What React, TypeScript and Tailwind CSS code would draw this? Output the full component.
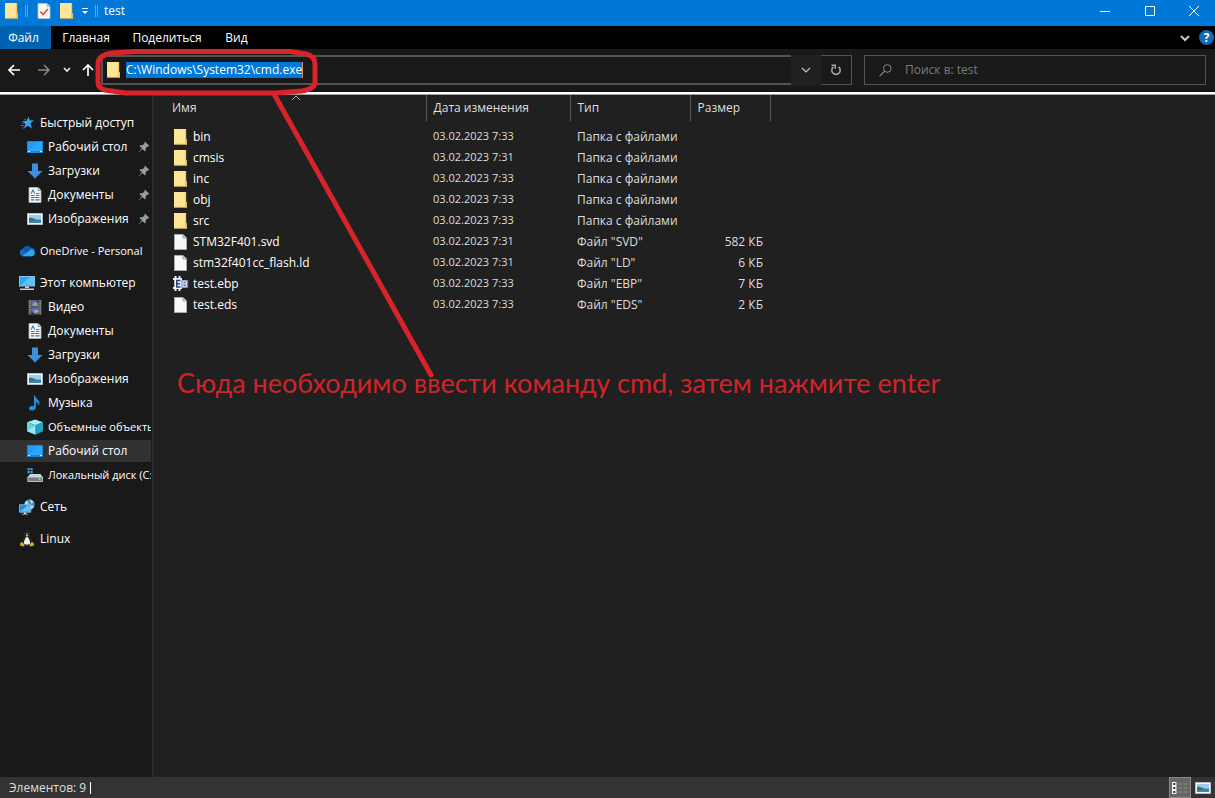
import type { ReactNode } from "react";

type Kind =
  | "star" | "desktop" | "download" | "document" | "picture" | "cloud" | "computer"
  | "video" | "music" | "cube" | "disk" | "network" | "linux" | "folder" | "file" | "project";

const glyphs: Record<Kind, ReactNode> = {
  star: (
    <>
      <path d="M9.5 1.5l1.3 4 4.2-.2-3.500 3 1.400 5.200-4-2.800L5 13.500l1.500-4.400L3.500 6.300l4.200-.5z" fill="#35a7ef" />
      <path d="M2.500 8h3M1.500 10.500h4M3 13h2.500M5 4.500h2" stroke="#1c6fa8" strokeWidth="1" />
    </>
  ),
  desktop: (
    <>
      <path d="M0 2h16v12H0z" fill="#1488e0" />
      <path d="M1 3h14v9H1z" fill="#1f9dfb" />
      <path d="M1 12L12 3h3v9z" fill="#3aabff" opacity=".6" />
      <path d="M1 12.500h2M13 12.500h2" stroke="#d8efff" strokeWidth="1" />
    </>
  ),
  download: <path d="M5 0.500h6v7.500h4.500L8 15.500.500 8H5z" fill="#3b8fdd" />,
  document: (
    <>
      <path d="M2 .5h9l3 3v12H2z" fill="#f4f7f9" stroke="#a9b4ba" strokeWidth=".8" />
      <path d="M11 .5v3h3" fill="#c3ccd1" stroke="#8b979e" strokeWidth=".7" />
      <path d="M4 6.500L6 3l1.500 3.500M4 8.500h3.500M9 6.500h3.500M9 8.500h3.500M4 10.500h8.500" stroke="#2f8bb5" strokeWidth="1.100" fill="none" />
      <path d="M4 12.800h3M8.500 12.800h4" stroke="#56636b" strokeWidth="1.200" />
    </>
  ),
  picture: (
    <>
      <path d="M.5 2.500h15v11H.5z" fill="#f3f5f6" stroke="#b8bec1" />
      <path d="M2 4h12v8H2z" fill="#9dcdec" />
      <path d="M2 7c3-1 5 1 7 1.500 2 .5 4 .2 5 .2V12H2z" fill="#3b7272" />
      <path d="M2 10.500c4-.8 8-1.300 12-.8V12H2z" fill="#3d86b8" />
    </>
  ),
  cloud: (
    <>
      <path d="M4 13.300a3.800 3.800 0 0 1 0-7.500A4.700 4.700 0 0 1 12 5a4.200 4.200 0 0 1 1 8.300z" fill="#0f6cbd" />
      <path d="M4 5.800A4.700 4.700 0 0 1 12 5l.8 1.500L7 10z" fill="#0a59ab" />
      <path d="M3 13.300L12 6.300a3.600 3.600 0 0 1 .8 7z" fill="#36a7ec" />
    </>
  ),
  computer: (
    <>
      <path d="M0 1h16v10.500H0z" fill="#9cc9e3" />
      <path d="M.8 1.800h14.400v8.900H.8z" fill="#2fa4f0" />
      <path d="M.8 10.700L11 1.800h4.200v8.900z" fill="#5cc0fa" />
      <path d="M6 11.500h4v1.500H6zM1 13.500h14v1.500H1z" fill="#c7d6df" />
    </>
  ),
  video: (
    <>
      <path d="M1.500 1h13v14.500h-13z" fill="#55585b" />
      <path d="M2.800 1.500v14M13.200 1.500v14" stroke="#c2c2bd" strokeWidth="1.100" strokeDasharray="1 1.200" />
      <path d="M4.500 2h7v5.500h-7zM4.500 9h7v6h-7z" fill="#5673bd" />
      <path d="M6 5.500L8 3l3 3.500H5zM6.500 14c0-3 3-4 5-3v2z" fill="#c7a463" />
      <path d="M4.500 12l3 3h-3zM9 2h2.500v2z" fill="#272c4a" />
    </>
  ),
  music: (
    <path d="M8 .5c.5 3.500 4.500 4.300 4.500 7.500 0 1.200-.5 2-1 2.700.2-2.200-1-3.300-2.700-3.800v5.600C8.800 14.300 7 15.500 5 15.500S2 14.500 2 13.300c0-1.500 1.700-2.500 3.500-2.300.6 0 1 .1 1.500.3V.5z" fill="#2493e6" />
  ),
  cube: (
    <>
      <path d="M0 3.200L8 .5l8 2.700-7.500 3z" fill="#a5f1f5" />
      <path d="M0 3.200l8.500 3v9.500L0 12.300z" fill="#60d4df" />
      <path d="M16 3.200l-7.500 3v9.500l7.500-3.400z" fill="#23a4bd" />
      <path d="M0 12.300l8.500-6v9.500z" fill="#c7f8f7" opacity=".55" />
    </>
  ),
  disk: (
    <>
      <path d="M.5 1h2.200v2.200H.5zM3.500 1h2.200v2.200H3.500zM.5 4h2.200v2.200H.5zM3.500 4h2.200v2.200H3.500z" fill="#29a9e4" />
      <path d="M3 7h10.500l2 3H.8z" fill="#d0d4d6" />
      <path d="M.8 10h14.700v4.500H.8z" fill="#747b80" stroke="#d5dadd" strokeWidth=".8" />
      <path d="M11.500 12h2" stroke="#7af089" strokeWidth="1.400" />
    </>
  ),
  network: (
    <>
      <circle cx="10.500" cy="5.500" r="5.200" fill="#4c93bb" />
      <path d="M7 2c2 .2 3 2 2 3.500L6 5.200C5.500 4 6 2.800 7 2zM11 .5c2 .5 3 1.500 3.500 3L12 4.500zM11 6.500l4 .5c-.8 2-2 3-4 3.500z" fill="#b7dced" />
      <path d="M.3 5.800h11.400v7.400H.3z" fill="#268bd2" stroke="#a2d1ee" strokeWidth=".8" />
      <path d="M1 12.500l8-6.300h2v6.300z" fill="#64c1f8" />
      <path d="M5 13.500h2v1.300H5zM3 14.700h6v.9H3z" fill="#d0dce2" />
    </>
  ),
  linux: (
    <>
      <path d="M8 .5C5.800.5 5.600 2.500 5.800 5c0 1.800-3 4.500-3 8 1.500 2.500 8.700 2.500 10.400 0 0-3.500-3-6-3-8C10.500 2.500 10.300.5 8 .5z" fill="#10151a" stroke="#4b4b48" strokeWidth=".5" />
      <path d="M8 5.500c-1 0-3.200 4.500-3.200 6.500C5 14.300 11 14.300 11.200 12 11.200 10 9 5.500 8 5.500z" fill="#f3f3ec" />
      <path d="M6.500 4.200L8 3.400l1.800.8L8 5.500z" fill="#f3b62c" />
      <path d="M7 2.800h.7M8.600 2.800h.7" stroke="#fff" />
      <path d="M1.300 12l2-1 2.400 3-1.200 1.600L1 14.500zM14.700 12l-2-1-2.400 3 1.200 1.600L15 14.500z" fill="#e8a629" />
    </>
  ),
  folder: (
    <>
      <path d="M1 0h12v10h1v5.500H1z" fill="#fbe08d" />
      <path d="M1 0h12v15H1z" fill="#ffe597" />
      <path d="M12 10h2v5.500h-2z" fill="#eac15a" />
      <path d="M1 15.200h13M12.800 0V10" stroke="#dcb550" strokeWidth=".7" />
    </>
  ),
  file: (
    <>
      <path d="M1.500 .5h8.500l3.500 3.500v11.500h-12z" fill="#f7f8f9" stroke="#b0b3b5" strokeWidth=".8" />
      <path d="M10 .5V4h3.500" fill="#d5d8da" stroke="#8e9295" strokeWidth=".8" />
    </>
  ),
  project: (
    <>
      <path d="M2.500 0v15M6.500 0v15M0 3h9M0 12h9" stroke="#e8edf7" strokeWidth="2" />
      <path d="M1.500 2.500h7.500v10.500H1.500z" fill="#eef2fa" />
      <path d="M8.500 4h6.700v8H8.500z" fill="#6f81b5" />
      <path d="M7.500 4.500H3.800v6.500h3.700M3.800 7.800h3.300" stroke="#2d4278" strokeWidth="1.600" fill="none" />
      <path d="M10 5h2.700l.8.800v1.200l-.8.700.8.800v1.400l-.8.800H10zM10 7.800h2.500" stroke="#dce3f5" strokeWidth="1.100" fill="none" />
    </>
  ),
};

function Glyph({ kind }: { kind: Kind }) {
  return (
    <svg viewBox="0 0 16 16" className="size-4 shrink-0" aria-hidden="true">
      {glyphs[kind]}
    </svg>
  );
}

function Pin() {
  return (
    <svg viewBox="0 0 12 12" className="mr-px size-3 shrink-0" aria-hidden="true">
      <path d="M7.200.8l4 4-1 .8-.8-.2-1.800 2 .1 2-1 .9L4.300 7.900.800 11.300l-.1-.4L3.700 7.300 1.500 5l1-.9 2 .1 2-1.800-.2-.8z" fill="#959da3" />
    </svg>
  );
}

type Entry = { kind: Kind; label: string; pinned?: boolean; current?: boolean; small?: boolean };
type Group = { head: Entry; items: Entry[] };

const groups: Group[] = [
  {
    head: { kind: "star", label: "Быстрый доступ" },
    items: [
      { kind: "desktop", label: "Рабочий стол", pinned: true },
      { kind: "download", label: "Загрузки", pinned: true },
      { kind: "document", label: "Документы", pinned: true },
      { kind: "picture", label: "Изображения", pinned: true },
    ],
  },
  { head: { kind: "cloud", label: "OneDrive - Personal", small: true }, items: [] },
  {
    head: { kind: "computer", label: "Этот компьютер" },
    items: [
      { kind: "video", label: "Видео" },
      { kind: "document", label: "Документы" },
      { kind: "download", label: "Загрузки" },
      { kind: "picture", label: "Изображения" },
      { kind: "music", label: "Музыка" },
      { kind: "cube", label: "Объемные объекты", small: true },
      { kind: "desktop", label: "Рабочий стол", current: true },
      { kind: "disk", label: "Локальный диск (C:)", small: true },
    ],
  },
  { head: { kind: "network", label: "Сеть" }, items: [] },
  { head: { kind: "linux", label: "Linux" }, items: [] },
];

const rows: { kind: Kind; name: string; date: string; type: string; size: string }[] = [
  { kind: "folder", name: "bin", date: "03.02.2023 7:33", type: "Папка с файлами", size: "" },
  { kind: "folder", name: "cmsis", date: "03.02.2023 7:31", type: "Папка с файлами", size: "" },
  { kind: "folder", name: "inc", date: "03.02.2023 7:33", type: "Папка с файлами", size: "" },
  { kind: "folder", name: "obj", date: "03.02.2023 7:33", type: "Папка с файлами", size: "" },
  { kind: "folder", name: "src", date: "03.02.2023 7:33", type: "Папка с файлами", size: "" },
  { kind: "file", name: "STM32F401.svd", date: "03.02.2023 7:31", type: 'Файл "SVD"', size: "582 КБ" },
  { kind: "file", name: "stm32f401cc_flash.ld", date: "03.02.2023 7:31", type: 'Файл "LD"', size: "6 КБ" },
  { kind: "project", name: "test.ebp", date: "03.02.2023 7:33", type: 'Файл "EBP"', size: "7 КБ" },
  { kind: "file", name: "test.eds", date: "03.02.2023 7:33", type: 'Файл "EDS"', size: "2 КБ" },
];

function TitleBar() {
  return (
    <header className="flex h-[26px] items-center bg-[#0078d7] pb-1">
      <div className="flex flex-1 items-center pl-1">
        <Glyph kind="folder" />
        <span className="ml-[5px] h-3 w-[3px] border-x border-[#5ba8e6]" />
        <button aria-label="Свойства" className="ml-2">
          <svg viewBox="0 0 16 16" className="size-4">
            <path d="M2 .5h9l3 3v12H2z" fill="#f7f8fa" stroke="#b9c8d8" strokeWidth=".8" />
            <path d="M11 .5v3h3" fill="#d5dae0" stroke="#8da1b5" strokeWidth=".7" />
            <path d="M4.500 8.500l2.500 3 5-5.500" fill="none" stroke="#dd4c33" strokeWidth="1.600" />
          </svg>
        </button>
        <button aria-label="Новая папка" className="ml-[7px]"><Glyph kind="folder" /></button>
        <button aria-label="Настройка панели" className="ml-[6px]">
          <svg viewBox="0 0 8 8" className="size-2"><path d="M1 1.500h6" stroke="#fff" /><path d="M1 4h6L4 7z" fill="#fff" /></svg>
        </button>
        <span className="ml-[6px] h-3 w-[3px] border-x border-[#5ba8e6]" />
        <h1 className="ml-[6px] text-xs text-white">test</h1>
      </div>
      <button aria-label="Свернуть" className="flex w-[45px] justify-center"><svg viewBox="0 0 10 10" className="size-[10px]"><path d="M0 5.500h10" stroke="#fff" /></svg></button>
      <button aria-label="Развернуть" className="flex w-[45px] justify-center"><svg viewBox="0 0 10 10" className="size-[10px]"><path d="M.5.500h9v9h-9z" stroke="#fff" fill="none" /></svg></button>
      <button aria-label="Закрыть" className="flex w-[43px] justify-center"><svg viewBox="0 0 10 10" className="size-[10px]"><path d="M0 0l10 10M10 0L0 10" stroke="#fff" /></svg></button>
    </header>
  );
}

function Tabs() {
  return (
    <nav className="flex h-[23px] items-stretch bg-black text-white">
      <button className="w-[51px] bg-[#0063b1] pr-1">Файл</button>
      <button className="w-[70px]">Главная</button>
      <button className="w-[92px]">Поделиться</button>
      <button className="w-[47px]">Вид</button>
      <div className="flex-1" />
      <button aria-label="Развернуть ленту" className="mr-2">
        <svg viewBox="0 0 12 12" className="size-3"><path d="M2 4l4 4 4-4" stroke="#c9c9c9" strokeWidth="2" fill="none" /></svg>
      </button>
      <button aria-label="Справка" className="mr-px flex size-[15px] items-center justify-center self-center rounded-full bg-[#1269b8] text-xs font-bold">?</button>
    </nav>
  );
}

function AddressRow() {
  return (
    <div className="flex h-[43px] items-center border-b border-[#111] bg-[#191919] pr-[9px]">
      <button aria-label="Назад" className="ml-2"><svg viewBox="0 0 12 12" className="size-3"><path d="M12 6H1.500M6 1L1 6l5 5" stroke="#fff" strokeWidth="1.700" fill="none" /></svg></button>
      <button aria-label="Вперёд" className="ml-[18px]"><svg viewBox="0 0 12 12" className="size-3"><path d="M0 6h10.500M6 1l5 5-5 5" stroke="#8a8a8a" strokeWidth="1.500" fill="none" /></svg></button>
      <button aria-label="Недавние" className="ml-[13px]"><svg viewBox="0 0 8 8" className="size-2"><path d="M1 2l3 3 3-3" stroke="#e8e8e8" strokeWidth="1.700" fill="none" /></svg></button>
      <button aria-label="Вверх" className="ml-[11px]"><svg viewBox="0 0 12 12" className="size-3"><path d="M6 12V1.500M1 6l5-5 5 5" stroke="#fff" strokeWidth="1.700" fill="none" /></svg></button>
      <div className="ml-[7px] flex h-[30px] flex-1 items-center border-y-2 border-l-2 border-[#535353] pl-[3px]">
        <Glyph kind="folder" />
        <input
          aria-label="Адрес"
          defaultValue="C:\Windows\System32\cmd.exe"
          className="ml-1 h-4 field-sizing-content border-r border-[#e08a4a] bg-[#0078d7] text-xs leading-4 text-white outline-none"
        />
      </div>
      <button aria-label="Журнал адресов" className="flex h-[30px] w-[30px] items-center justify-center bg-[#202020]"><svg viewBox="0 0 10 10" className="size-[10px]"><path d="M1 3l4 4 4-4" stroke="#c4c4c4" strokeWidth="1.200" fill="none" /></svg></button>
      <button aria-label="Обновить" className="flex h-[30px] w-[31px] items-center justify-center border border-l-0 border-[#535353]">
        <svg viewBox="0 0 12 12" className="size-3"><path d="M8.600 2.900A4.200 4.200 0 1 1 3.400 2.900" stroke="#a5a5a5" strokeWidth="1.600" fill="none" /><path d="M1.500 1.300h3.800v3.800" stroke="#a5a5a5" strokeWidth="1.500" fill="none" /></svg>
      </button>
      <label className="ml-3 flex h-[30px] w-[342px] items-center border border-[#535353] pl-[14px]">
        <svg viewBox="0 0 13 13" className="size-[13px] shrink-0"><circle cx="8.300" cy="4.500" r="3.800" stroke="#8a8a8a" fill="none" /><path d="M5.600 7.200L.5 12.300" stroke="#8a8a8a" strokeWidth="1.200" /></svg>
        <input aria-label="Поиск" placeholder="Поиск в: test" className="ml-[13px] w-full bg-transparent text-xs text-white outline-none placeholder:text-[#7b7b7b]" />
      </label>
    </div>
  );
}

function SideRow({ entry, nested }: { entry: Entry; nested: boolean }) {
  return (
    <li className="py-px">
      <a
        href="#"
        className={`flex h-[22px] items-center gap-[5px] overflow-hidden whitespace-nowrap text-white ${nested ? "pl-[27px]" : "pl-[19px]"} ${entry.current ? "bg-[#323232]" : ""}`}
      >
        <Glyph kind={entry.kind} />
        <span className={entry.small ? "flex-1 text-[11px]" : "flex-1"}>{entry.label}</span>
        {entry.pinned && <Pin />}
      </a>
    </li>
  );
}

function Sidebar() {
  return (
    <aside className="w-[154px] shrink-0 border-r-2 border-[#2b2b2b] bg-[#191919] pt-4">
      <div className="flex flex-col gap-2 pr-px">
        {groups.map((group) => (
          <ul key={group.head.label}>
            <SideRow entry={group.head} nested={false} />
            {group.items.map((item) => (
              <SideRow key={item.label} entry={item} nested />
            ))}
          </ul>
        ))}
      </div>
    </aside>
  );
}

function FileTable() {
  return (
    <table className="ml-[11px] w-[605px] table-fixed border-collapse text-left">
      <colgroup>
        <col className="w-[261px]" />
        <col className="w-[144px]" />
        <col className="w-[120px]" />
        <col className="w-[80px]" />
      </colgroup>
      <thead>
        <tr className="h-[26px] text-[#dedede]">
          <th className="relative border-r border-[#5a5a5a] pl-[7px] font-normal">
            Имя
            <svg viewBox="0 0 10 6" className="absolute top-0 left-[126px] h-[6px] w-[10px]"><path d="M1 5l4-4 4 4" stroke="#b0b0b0" fill="none" /></svg>
          </th>
          <th className="border-r border-[#5a5a5a] pl-[7px] font-normal">Дата изменения</th>
          <th className="border-r border-[#5a5a5a] pl-[7px] font-normal">Тип</th>
          <th className="border-r border-[#5a5a5a] pl-[7px] font-normal">Размер</th>
        </tr>
      </thead>
      <tbody className="before:block before:h-[5px]">
        {rows.map((row) => (
          <tr key={row.name} className="h-[21px] text-[#dedede]">
            <td className="pl-2 text-white">
              <div className="flex items-center gap-1">
                <Glyph kind={row.kind} />
                {row.name}
              </div>
            </td>
            <td className="pl-[7px] text-[11px]">{row.date}</td>
            <td className="pl-[7px]">{row.type}</td>
            <td className="pr-[7px] text-right">{row.size}</td>
          </tr>
        ))}
      </tbody>
    </table>
  );
}

function StatusBar() {
  return (
    <footer className="flex h-[21px] items-center bg-[#333] pl-[9px] text-[#dedede]">
      <span>Элементов: 9</span>
      <span className="ml-1 h-3 w-px bg-white" />
      <div className="flex-1" />
      <button aria-label="Таблица" className="flex h-full w-[22px] items-center justify-center border border-[#8a8a8a] bg-[#666]">
        <svg viewBox="0 0 16 14" className="h-[14px] w-4">
          <path d="M0 1h4.500v12H0z" fill="#f2f2f2" />
          <path d="M1.300 2h2v2h-2zM1.300 6h2v2h-2zM1.300 10h2v2h-2z" fill="#333" />
          <path d="M6 3h4M11.500 3h4M6 7h4M11.500 7h4M6 11h4M11.500 11h4" stroke="#918d80" />
        </svg>
      </button>
      <button aria-label="Крупные значки" className="mx-1"><Glyph kind="picture" /></button>
    </footer>
  );
}

function Annotation() {
  return (
    <>
      <svg viewBox="0 0 460 390" className="pointer-events-none absolute top-0 left-0 h-[390px] w-[460px]" aria-hidden="true">
        <path d="M112 53L135 51.500h155L306 54Q315 56 315 64V82Q315 89 302 91L276 93H125L105 90Q98 88 98 82V64Q98 55 112 53z" fill="none" stroke="#d9232a" strokeWidth="5" />
        <path d="M274 94L431 375" stroke="#d9232a" strokeWidth="5" strokeLinecap="round" />
      </svg>
      <p className="pointer-events-none absolute top-[366px] left-[177px] font-['Lato','Open_Sans',sans-serif] text-[27px] leading-[34px] whitespace-nowrap text-[#d2232a]">
        Сюда необходимо ввести команду cmd, затем нажмите enter
      </p>
    </>
  );
}

export default function App() {
  return (
    <div className="relative flex min-h-screen flex-col bg-[#202020] font-['Open_Sans','Noto_Sans',sans-serif] text-xs">
      <TitleBar />
      <Tabs />
      <AddressRow />
      <div className="h-[3px] border-b border-[#a0a0a0] bg-white" />
      <div className="flex flex-1">
        <Sidebar />
        <main className="flex-1">
          <FileTable />
        </main>
      </div>
      <StatusBar />
      <Annotation />
    </div>
  );
}
